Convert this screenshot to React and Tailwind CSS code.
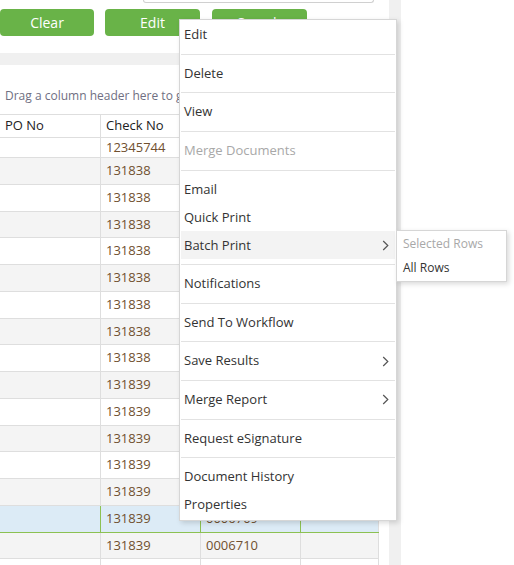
import React from 'react';

const FONT = { fontFamily: '"Open Sans", "Noto Sans", sans-serif' };

const rows = [
  { check: '12345744', doc: '0006695', first: true },
  ...Array.from({ length: 8 }, (_, i) => ({ check: '131838', doc: String(6696 + i).padStart(7, '0') })),
  ...Array.from({ length: 8 }, (_, i) => ({ check: '131839', doc: String(6704 + i).padStart(7, '0') })),
];

const menu = [
  { label: 'Edit', sep: true },
  { label: 'Delete', sep: true },
  { label: 'View', sep: true },
  { label: 'Merge Documents', disabled: true, sep: true },
  { label: 'Email' },
  { label: 'Quick Print' },
  { label: 'Batch Print', sub: true, active: true, sep: true },
  { label: 'Notifications', sep: true },
  { label: 'Send To Workflow', sep: true },
  { label: 'Save Results', sub: true, sep: true },
  { label: 'Merge Report', sub: true, sep: true },
  { label: 'Request eSignature', sep: true },
  { label: 'Document History' },
  { label: 'Properties' },
];

function Chevron() {
  return (
    <svg width="7" height="11" viewBox="0 0 7 11" fill="none">
      <path d="M1.2 1 L5.8 5.5 L1.2 10" stroke="#555" strokeWidth="1.2" />
    </svg>
  );
}

function Row({ r, i }) {
  const selected = i === 14;
  const bg = selected ? 'bg-[#dcebf6]' : i % 2 === 1 ? 'bg-[#f4f4f4]' : 'bg-white';
  const line = selected ? 'border-[#8cc152]' : 'border-[#dedede]';
  return (
    <div className={`flex ${bg} border-b ${line} ${r.first ? 'h-[20px]' : 'h-[26.75px]'}`}>
      <div className={`w-[101px] border-r ${line}`} />
      <div className={`w-[100px] border-r ${line} pl-[5px] flex items-center text-[#70502f]`}>{r.check}</div>
      <div className={`w-[100px] border-r ${line} pl-[5px] flex items-center text-[#70502f]`}>{r.doc}</div>
      <div className="w-[78px] border-r border-[#dedede]" />
    </div>
  );
}

export default function App() {
  return (
    <div className="relative w-[514px] h-[565px] overflow-hidden bg-white text-[13px]" style={FONT}>
      <div className="flex h-full">
        <div className="w-[389px] shrink-0">
          <div className="ml-[143px] w-[231px] h-[3px] border border-t-0 border-[#d0d0d0] rounded-b-[4px]" />
          <div className="mt-[6px] flex h-[27px] text-[14px] text-white">
            <button className="w-[94px] rounded-[4px] bg-[#69b348]">Clear</button>
            <button className="ml-[11px] w-[95px] rounded-[4px] bg-[#69b348]">Edit</button>
            <button className="ml-[12px] w-[95px] rounded-[4px] bg-[#69b348]">Search</button>
          </div>
          <div className="mt-[17px] h-[12px] bg-[#f0f0f0]" />
          <div className="mt-[22px] pl-[5px] text-[12px] leading-[18px] text-[#6f6f82] whitespace-nowrap">
            Drag a column header here to group by that column
          </div>
          <div className="mt-[9px] w-[379px] border-t border-[#dedede]">
            <div className="flex h-[23px] border-b border-[#dedede] text-[#222]">
              <div className="w-[101px] border-r border-[#dedede] pl-[5px] flex items-center">PO No</div>
              <div className="w-[100px] border-r border-[#dedede] pl-[5px] flex items-center">Check No</div>
              <div className="w-[100px] border-r border-[#dedede] pl-[5px] flex items-center">Document No</div>
              <div className="w-[78px] border-r border-[#dedede]" />
            </div>
            {rows.map((r, i) => <Row key={i} r={r} i={i} />)}
          </div>
        </div>
        <div className="w-[12px] h-full bg-[#f0f0f0]" />
      </div>

      <div className="absolute left-[179px] top-[19px] w-[218px] border border-[#d6d6d6] bg-white p-px shadow-[2px_2px_5px_rgba(0,0,0,0.15)]">
        {menu.map((m) => (
          <React.Fragment key={m.label}>
            <div
              className={`h-[28px] pl-[3px] pr-[6px] flex items-center justify-between ${
                m.active ? 'bg-[#f3f3f3]' : ''
              } ${m.disabled ? 'text-[#a8a8a8]' : 'text-[#333]'}`}
            >
              <span>{m.label}</span>
              {m.sub && <Chevron />}
            </div>
            {m.sep && <div className="h-px bg-[#e2e2e2] my-[4.8px]" />}
          </React.Fragment>
        ))}
      </div>

      <div className="absolute left-[396px] top-[230px] w-[111px] h-[52px] border border-[#d6d6d6] bg-white pt-[1px] text-[12px] shadow-[2px_2px_5px_rgba(0,0,0,0.15)]">
        <div className="h-[24px] pl-[6px] flex items-center text-[#a8a8a8]">Selected Rows</div>
        <div className="h-[24px] pl-[6px] flex items-center text-[#333]">All Rows</div>
      </div>
    </div>
  );
}
